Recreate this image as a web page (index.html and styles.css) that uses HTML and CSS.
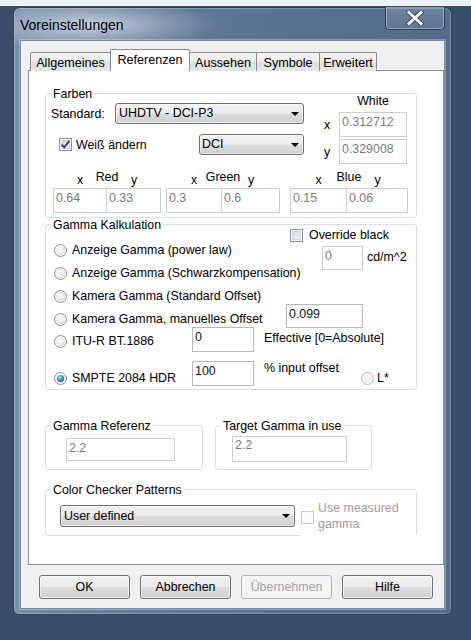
FILE: index.html
```html
<!DOCTYPE html>
<html>
<head>
<meta charset="utf-8">
<title>Voreinstellungen</title>
<link rel="stylesheet" href="styles.css">
</head>
<body>
<div class="strip"></div>
<div class="window">
  <div class="titlebar">
    <span class="title">Voreinstellungen</span>
    <div class="close">
      <svg width="18" height="14" viewBox="0 0 18 14"><path d="M3 1.5 L15 12.5 M15 1.5 L3 12.5" stroke="#2c3d58" stroke-width="4.6" stroke-linecap="square"/><path d="M3 1.5 L15 12.5 M15 1.5 L3 12.5" stroke="#ffffff" stroke-width="3" stroke-linecap="square"/></svg>
    </div>
  </div>
  <div class="client">
    <div class="tabs">
      <div class="tab t1">Allgemeines</div>
      <div class="tab sel t2">Referenzen</div>
      <div class="tab t3">Aussehen</div>
      <div class="tab t4">Symbole</div>
      <div class="tab t5">Erweitert</div>
    </div>
    <div class="panel">
      <div class="group g-farben">
        <div class="legend">Farben</div>
        <div class="farben-top">
          <div class="ft-left">
            <div class="frow r-std">
              <span class="lbl-std">Standard:</span>
              <div class="combo c-std"><span>UHDTV - DCI-P3</span><i class="arrow"></i></div>
            </div>
            <div class="frow r-weiss">
              <div class="check chk-weiss">
                <span class="cbox"><svg width="11" height="11" viewBox="0 0 11 11"><path d="M1.6 5.6 L4.2 8.4 L9.4 1.8" fill="none" stroke="#2f3f86" stroke-width="1.9"/></svg></span>
                <span>Weiß ändern</span>
              </div>
              <div class="combo c-dci"><span>DCI</span><i class="arrow"></i></div>
            </div>
          </div>
          <div class="ft-right">
            <div class="white-lbl">White</div>
            <div class="wrow wrow1"><span class="axis">x</span><div class="field dis w-field">0.312712</div></div>
            <div class="wrow wrow2"><span class="axis">y</span><div class="field dis w-field">0.329008</div></div>
          </div>
        </div>
        <div class="rgb">
          <div class="prim p-red">
            <span class="ax ax1">x</span><span class="pname">Red</span><span class="ax ax2">y</span>
            <div class="field dis f1">0.64</div><div class="field dis f2">0.33</div>
          </div>
          <div class="prim p-green">
            <span class="ax ax1">x</span><span class="pname">Green</span><span class="ax ax2">y</span>
            <div class="field dis f1">0.3</div><div class="field dis f2">0.6</div>
          </div>
          <div class="prim p-blue">
            <span class="ax ax1">x</span><span class="pname">Blue</span><span class="ax ax2">y</span>
            <div class="field dis f1">0.15</div><div class="field dis f2">0.06</div>
          </div>
        </div>
      </div>

      <div class="group g-gamma">
        <div class="legend">Gamma Kalkulation</div>
        <div class="ggrid">
          <div class="check ov"><span class="cbox"></span><span>Override black</span></div>
          <div class="field dis in0">0</div>
          <span class="cdm">cd/m^2</span>
          <div class="radio rd1"><span class="rdot"></span><span>Anzeige Gamma (power law)</span></div>
          <div class="radio rd2"><span class="rdot"></span><span>Anzeige Gamma (Schwarzkompensation)</span></div>
          <div class="radio rd3"><span class="rdot"></span><span>Kamera Gamma (Standard Offset)</span></div>
          <div class="radio rd4"><span class="rdot"></span><span>Kamera Gamma, manuelles Offset</span></div>
          <div class="field in099">0.099</div>
          <div class="radio rd5"><span class="rdot"></span><span>ITU-R BT.1886</span></div>
          <div class="field initu">0</div>
          <span class="eff">Effective [0=Absolute]</span>
          <div class="radio rd6"><span class="rdot on"><span class="dot"></span></span><span>SMPTE 2084 HDR</span></div>
          <div class="field insm">100</div>
          <span class="pct">% input offset</span>
          <div class="radio lstar"><span class="rdot dis"></span><span>L*</span></div>
        </div>
      </div>

      <div class="grow">
        <div class="group g-ref">
          <div class="legend">Gamma Referenz</div>
          <div class="field dis in-ref">2.2</div>
        </div>
        <div class="group g-tgt">
          <div class="legend">Target Gamma in use</div>
          <div class="field dis in-tgt">2.2</div>
        </div>
      </div>

      <div class="group g-cc">
        <div class="legend">Color Checker Patterns</div>
        <div class="ccrow">
          <div class="combo c-cc"><span>User defined</span><i class="arrow"></i></div>
          <div class="usem">
            <span class="cbox disbox"></span>
            <span class="usem-txt">Use measured<br>gamma</span>
          </div>
        </div>
      </div>
    </div>
    <div class="buttons">
      <div class="btn">OK</div>
      <div class="btn">Abbrechen</div>
      <div class="btn dis">Übernehmen</div>
      <div class="btn">Hilfe</div>
    </div>
  </div>
</div>
</body>
</html>
```

FILE: styles.css
```css
* { box-sizing: border-box; }
html, body { margin: 0; padding: 0; }
body {
  width: 471px;
  height: 640px;
  overflow: hidden;
  background: #3a4e6b;
  font-family: "Liberation Sans", Arial, sans-serif;
  font-size: 12.4px;
  color: #000;
}
.strip { height: 6px; background: #edf0f4; }

.window {
  margin: 1px 0 0 13px;
  width: 439px;
  height: 608px;
  border: 1px solid #2f4059;
  border-radius: 7px 7px 6px 6px;
  padding: 0 6px 5px 6px;
  background:
    radial-gradient(ellipse 130px 26px at 75px 17px, rgba(214,222,232,0.85) 0%, rgba(214,222,232,0.35) 55%, rgba(214,222,232,0) 100%),
    linear-gradient(to right, #788ca7 0%, #667c99 25%, #5a7192 60%, #546b8b 100%);
  box-shadow: inset 0 0 0 1px rgba(255,255,255,0.25);
}
.titlebar {
  height: 32px;
  display: flex;
  justify-content: space-between;
  align-items: center;
}
.title { font-size: 14px; line-height: 16px; color: #000; padding-top: 1px; }
.close {
  align-self: flex-start;
  margin-top: -1px;
  width: 60px;
  height: 23px;
  border: 1px solid #2d3e58;
  border-top: 0;
  border-radius: 0 0 5px 5px;
  background: linear-gradient(rgba(255,255,255,0.16), rgba(255,255,255,0.05));
  box-shadow: inset 0 0 0 1px rgba(255,255,255,0.35);
  display: flex;
  align-items: center;
  justify-content: center;
}

.client {
  height: 569px;
  background: #f0f0f0;
  border: 1px solid #7b8ca3;
  box-shadow: 0 0 0 1px rgba(255,255,255,0.3);
  padding: 8px 0 0 7px;
}

.tabs {
  display: flex;
  align-items: flex-end;
  height: 22px;
  margin-left: 2px;
  margin-bottom: -1px;
}
.tab {
  height: 19px;
  border: 1px solid #898c95;
  border-bottom: 0;
  border-radius: 2px 2px 0 0;
  margin-left: -1px;
  background: linear-gradient(#f4f4f4 0%, #ececec 50%, #e0e0e0 51%, #e6e6e6 100%);
  display: flex;
  justify-content: center;
  align-items: center;
  line-height: 15px;
  font-size: 12.6px;
  padding-top: 2px;
}
.t1 { margin-left: 0; width: 81px; }
.t2 { width: 80px; }
.t3 { width: 68px; }
.t4 { width: 64px; }
.t5 { width: 58px; }
.tab.sel {
  height: 22px;
  background: #fff;
  position: relative;
  z-index: 1;
  padding-top: 0;
  padding-bottom: 1px;
}

.panel {
  height: 495px;
  background: #fff;
  border: 1px solid #898c95;
  padding: 22px 0 0 16px;
}

.group {
  border: 1px solid #d5dfe5;
  border-radius: 3px;
  padding: 0 5px;
}
.legend {
  display: table;
  margin-top: -7px;
  padding: 0 2px;
  line-height: 14px;
  background: #fff;
}

/* Farben */
.g-farben { width: 372px; padding-bottom: 4px; }
.farben-top { display: flex; align-items: flex-start; }
.ft-left { width: 253px; }
.frow { display: flex; align-items: center; }
.r-std { margin-top: 2px; }
.r-weiss { margin-top: 10px; justify-content: space-between; }
.lbl-std { width: 64px; }
.combo {
  height: 21px;
  border: 1px solid #707070;
  border-radius: 3px;
  background: linear-gradient(#f2f2f2 0%, #ebebeb 50%, #dddddd 51%, #cfcfcf 100%);
  box-shadow: inset 0 0 0 1px rgba(255,255,255,0.55);
  display: flex;
  align-items: center;
  justify-content: space-between;
  padding: 0 4px 0 3px;
  line-height: 15px;
}
.arrow {
  width: 0;
  height: 0;
  border-left: 4px solid transparent;
  border-right: 4px solid transparent;
  border-top: 4px solid #000;
}
.c-std { width: 189px; }
.c-dci { width: 105px; padding-left: 2px; }

.check { display: flex; align-items: center; }
.chk-weiss { margin-left: 8px; gap: 4px; }
.cbox {
  width: 13px;
  height: 13px;
  border: 1px solid #8e8f8f;
  background: linear-gradient(135deg, #c6cad0 0%, #e8eaec 60%, #f8f8f8 100%);
  box-shadow: inset 0 0 0 1px #ffffff, inset 0 0 0 2px #d0d4d9;
  display: flex;
  align-items: center;
  justify-content: center;
  flex: none;
}
.cbox.disbox {
  border-color: #c8c8c8;
  background: #fbfbfb;
  box-shadow: inset 0 0 0 1px #ffffff;
}

.ft-right { margin-left: 18px; width: 85px; }
.white-lbl {
  margin-top: -7px;
  line-height: 14px;
  padding-left: 17px;
  text-align: center;
}
.wrow { display: flex; align-items: center; }
.wrow1 { margin-top: 4px; }
.wrow2 { margin-top: 2px; }
.axis { width: 17px; padding-left: 2px; }
.w-field { width: 68px; }

.field {
  height: 25px;
  border: 1px solid #b4b7bc;
  background: #fff;
  padding: 2px 0 0 2px;
  line-height: 15px;
  color: #111;
  white-space: nowrap;
}
.field.dis { color: #7a7a7a; border-color: #cbcdd0; }

.rgb { display: flex; margin-top: 6px; }
.prim {
  display: grid;
  grid-template-rows: 18px 25px;
}
.p-red { margin-left: 2px; grid-template-columns: 54px 54px; }
.p-green { margin-left: 5px; grid-template-columns: 56px 58px; }
.p-blue { margin-left: 10px; grid-template-columns: 57px 61px; }
.ax { grid-row: 1; justify-self: center; padding-top: 3px; line-height: 15px; }
.ax1 { grid-column: 1; }
.ax2 { grid-column: 2; }
.pname { grid-row: 1; grid-column: 1 / 3; justify-self: center; line-height: 15px; }
.f1 { grid-row: 2; grid-column: 1; }
.f2 { grid-row: 2; grid-column: 2; margin-left: -1px; }

/* Gamma */
.g-gamma { width: 372px; margin-top: 6px; padding-bottom: 3px; }
.ggrid {
  display: grid;
  margin-top: -4px;
  grid-template-columns: 141px 62px 10px 22px 4px 32px 39px 1fr;
  grid-template-rows: 11px 23px 23px 23px 22px 22px 9px 25px;
  line-height: 15px;
}
.radio {
  display: flex;
  align-items: center;
  gap: 5px;
  padding-left: 3px;
  align-self: center;
  justify-self: start;
  white-space: nowrap;
}
.rdot {
  width: 13px;
  height: 13px;
  border-radius: 50%;
  border: 1px solid #8e8f8f;
  background: radial-gradient(circle at 45% 40%, #fbfbfb 0%, #e6e6e6 50%, #c8c8c8 100%);
  box-shadow: inset 0 0 0 1px rgba(255,255,255,0.8);
  display: flex;
  align-items: center;
  justify-content: center;
  flex: none;
}
.rdot.dis { border-color: #b5b5b5; background: radial-gradient(circle at 45% 40%, #fdfdfd 0%, #ececec 60%, #dadada 100%); }
.dot {
  width: 7px;
  height: 7px;
  border-radius: 50%;
  background: radial-gradient(circle at 40% 35%, #b6ecff 0%, #3c9ad0 40%, #1a557f 80%, #123d5c 100%);
}
.rd1 { grid-row: 2; grid-column: 1 / -1; }
.rd2 { grid-row: 3; grid-column: 1 / -1; }
.rd3 { grid-row: 4; grid-column: 1 / -1; }
.rd4 { grid-row: 5; grid-column: 1 / -1; }
.rd5 { grid-row: 6; grid-column: 1 / -1; }
.rd6 { grid-row: 8; grid-column: 1 / -1; align-self: end; }
.ov { grid-row: 1 / 3; grid-column: 6 / -1; align-self: start; gap: 6px; white-space: nowrap; }
.in0 { grid-row: 2 / 4; grid-column: 7 / -1; align-self: start; justify-self: start; margin-top: 7px; width: 41px; height: 24px; }
.cdm { grid-row: 2 / 4; grid-column: 8; align-self: start; margin-top: 11px; margin-left: 6px; white-space: nowrap; }
.in099 { grid-row: 5; grid-column: 5 / -1; align-self: start; justify-self: start; margin-top: -4px; width: 77px; height: 24px; }
.initu { grid-row: 6; grid-column: 2; align-self: start; margin-top: -3px; }
.eff { grid-row: 6; grid-column: 4 / -1; align-self: start; margin-top: 1px; white-space: nowrap; }
.insm { grid-row: 8; grid-column: 2; }
.pct { grid-row: 8; grid-column: 4 / 8; align-self: start; white-space: nowrap; }
.lstar { grid-row: 8; grid-column: 8; align-self: end; gap: 3px; padding-left: 0; }

/* Gamma Referenz / Target */
.grow { display: flex; gap: 12px; margin-top: 35px; }
.g-ref { width: 158px; padding-bottom: 8px; }
.g-tgt { width: 157px; padding-bottom: 7px; }
.in-ref { margin: 5px 0 0 15px; width: 109px; height: 23px; padding-top: 2px; }
.in-tgt { margin: 3px 0 0 11px; width: 115px; height: 26px; padding-top: 1px; }

/* Color checker */
.g-cc { width: 372px; margin-top: 19px; padding-bottom: 3px; }
.ccrow { display: flex; align-items: flex-start; }
.c-cc { width: 235px; height: 22px; margin: 8px 0 0 9px; }
.usem {
  flex: 1;
  display: flex;
  align-items: flex-start;
  gap: 4px;
  margin: 3px -5px -6px 6px;
  padding-bottom: 6px;
  background: #fff;
}
.usem .cbox { margin-top: 11px; }
.usem-txt { line-height: 16px; color: #a0a0a0; }

/* Buttons */
.buttons { display: flex; gap: 10px; margin-top: 10px; padding-left: 11px; }
.btn {
  width: 91px;
  height: 24px;
  border: 1px solid #707070;
  border-radius: 3px;
  background: linear-gradient(#f2f2f2 0%, #ebebeb 50%, #dddddd 51%, #cfcfcf 100%);
  box-shadow: inset 0 0 0 1px rgba(255,255,255,0.6);
  display: flex;
  align-items: center;
  justify-content: center;
  line-height: 15px;
}
.btn.dis {
  border-color: #b0b4b8;
  background: #f4f4f4;
  color: #a3a3a3;
  box-shadow: none;
}
```
